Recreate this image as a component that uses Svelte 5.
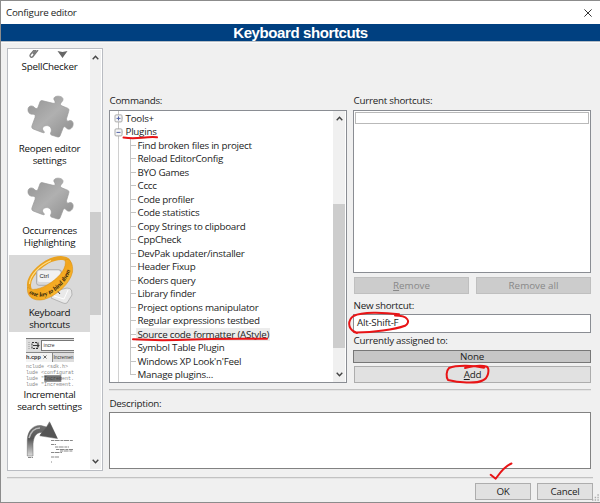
<script>
  const commands = [
    'Find broken files in project', 'Reload EditorConfig', 'BYO Games', 'Cccc',
    'Code profiler', 'Code statistics', 'Copy Strings to clipboard', 'CppCheck',
    'DevPak updater/installer', 'Header Fixup', 'Koders query', 'Library finder',
    'Project options manipulator', 'Regular expressions testbed',
    'Source code formatter (AStyle)', 'Symbol Table Plugin',
    "Windows XP Look'n'Feel", 'Manage plugins...'
  ];
  const selected = 'Source code formatter (AStyle)';
</script>

{#snippet chevron(up)}
  <svg class="chev" width="7" height="5" viewBox="0 0 7 5">
    <path d={up ? 'M.7 4.2 3.5 1.2 6.3 4.2' : 'M.7 .8 3.5 3.8 6.3 .8'} fill="none" stroke="#444" stroke-width="1.4" />
  </svg>
{/snippet}

{#snippet puzzle()}
  <svg width="48" height="48" viewBox="0 0 48 48">
    <defs>
      <linearGradient id="pz" x1="0" y1="0" x2="1" y2="1">
        <stop offset="0" stop-color="#929292" /><stop offset=".5" stop-color="#b0b0b0" /><stop offset="1" stop-color="#8c8c8c" />
      </linearGradient>
    </defs>
    <path d="M16 8.6 L27 11.3 C29.8 11.6 29.5 10 28.3 8.2 C26.8 5.6 29.5 4 32.5 4.2 C36 4.3 38 6.5 36.5 9 C35 11 33.6 12 35.2 13.6 L42 16.4 C43.2 17 43 18.5 42.6 19.6 L40.6 26.3 C40.2 29 41.5 29.8 43.3 28.7 C46 27.8 47.7 30.2 47 33.3 C46.2 36.8 43 38.2 40.8 36.4 C39.2 34.5 38 34 37 36.2 L34.2 43.5 C33.7 45 32.5 45.2 31 44.8 L25.4 43 C24 42.2 24.4 41 25.2 39.4 C26 36 23.5 33.4 20.2 33.6 C16.8 34 15.6 36.7 17.3 38.7 C19 40.4 18.6 41.2 16.5 40.5 L7.3 37 C5.9 36.4 5.5 35.3 6 33.7 L9 25.5 C9.8 22.7 8.6 22 6.5 22.2 C3.5 22.3 1.7 20 2 17.2 C2.3 14.2 5 13.2 7.5 14.6 C9.3 16.8 11.2 17.3 12 15.3 L14 9.8 Q14.5 8.5 16 8.6Z" fill="url(#pz)" stroke="#999" stroke-width=".7" />
  </svg>
{/snippet}

<div class="window">
  <header class="caption">
    <span>Configure editor</span>
    <svg width="8" height="8" viewBox="0 0 8 8"><path d="M.4.4 7.6 7.6M7.6.4.4 7.6" stroke="#333" stroke-width="1" /></svg>
  </header>
  <h1>Keyboard shortcuts</h1>

  <main>
    <aside>
      <div class="pages">
        <div class="page first">
          <svg width="48" height="8" viewBox="0 0 48 8">
            <path d="M4 5 9 -1M6.5 7 12 0M4 5Q4 8 6.5 7M7 4 10 0" fill="none" stroke="#777" stroke-width="1.4" />
            <path d="M31.5 1 36.5 2 41.5 1 36.5 8Z" fill="#666" />
          </svg>
          <span>SpellChecker</span>
        </div>
        <div class="page">{@render puzzle()}<span>Reopen editor<br />settings</span></div>
        <div class="page">{@render puzzle()}<span>Occurrences<br />Highlighting</span></div>
        <div class="page active">
          <svg width="48" height="48" viewBox="0 0 48 48">
            <defs>
              <linearGradient id="ring" x1="0" y1="0" x2="1" y2="1">
                <stop offset="0" stop-color="#ffd35c" /><stop offset=".5" stop-color="#f2a51c" /><stop offset="1" stop-color="#ffc440" />
              </linearGradient>
              <path id="band" d="M3 37.5 C13 44 24 39.5 31 33.5 C38 27.5 44.5 19 46 6.5" />
            </defs>
            <path d="M29 35 41 32 Q44 32 45.5 34 L46 39 41 47 Q39 48 37 47 L25 42Z" fill="#e9e9e9" stroke="#a8a8a8" stroke-width=".8" />
            <path d="M28 40 38 43 42 34" fill="none" stroke="#fff" />
            <path d="M4 34 C0 25 8 14 21 6 C33 0 43 1 43.5 8" fill="none" stroke="#e9a220" stroke-width="4" />
            <rect x="10.5" y="13.8" width="25" height="15.5" rx="2.5" fill="#d9d9d9" stroke="#999" stroke-width=".7" />
            <rect x="12" y="14.5" width="22" height="11.5" rx="1.5" fill="#f1f1f1" />
            <text x="13.5" y="21.6" class="ctrl">Ctrl</text>
            <path d="M1.6 31 C4 35.5 15 33.5 25 26.5 C35 19.5 41 11 39 4 C44 1.5 47.5 8 46.5 16 C44 28 30 40 18 43.5 C7 46 0 40 1.6 31Z" fill="url(#ring)" stroke="#d48b10" stroke-width=".5" />
            <path d="M3.5 28 C4 19 14 9 25 4.5" fill="none" stroke="#ffdf88" stroke-width="1.2" />
            <text class="ringtext"><textPath href="#band" textLength="54">one key to bind them</textPath></text>
            <path d="M32 35.5 34 38" stroke="#333" stroke-width="1" />
          </svg>
          <span>Keyboard<br />shortcuts</span>
        </div>
        <div class="page">
          <svg width="48" height="48" viewBox="0 0 48 48">
            <rect width="48" height="24" fill="#ddd" />
            <rect y="0" width="48" height="1" fill="#777" />
            <path d="M3 4v8" stroke="#999" stroke-width="1" stroke-dasharray="1 1" />
            <rect x="6" y="4.5" width="6" height="6" fill="none" stroke="#333" stroke-dasharray="2 1" /><path d="M7 7.5h6M11 5.5l2 2-2 2" fill="none" stroke="#333" />
            <rect x="15.5" y="2.5" width="33" height="10" fill="#fff" stroke="#777" />
            <text x="17.5" y="9.2" class="mini" textLength="11" lengthAdjust="spacingAndGlyphs">incre</text>
            <rect y="15" width="26" height="9" fill="#f3f3f3" />
            <path d="M26.5 15v9M0 14.5h48" stroke="#888" />
            <text x="0" y="21.4" class="mini bold" textLength="15" lengthAdjust="spacingAndGlyphs">h.cpp</text>
            <path d="M17.5 17.5 20.5 20.5M20.5 17.5 17.5 20.5" stroke="#444" stroke-width=".8" />
            <text x="27.5" y="21.4" class="mini" textLength="20" lengthAdjust="spacingAndGlyphs">Incremen</text>
            <rect y="24" width="48" height="24" fill="#fff" />
            <text x="0" y="29.8" class="code">nclude &lt;sdk.h&gt;</text>
            <text x="0" y="36" class="code">lude &lt;configurat</text>
            <rect x="18.3" y="37.2" width="17" height="6.6" fill="#777" />
            <text x="0" y="42.2" class="code">lude "<tspan fill="#444">Increm</tspan>ent.</text>
            <text x="0" y="47.8" class="code">lude "Increment.</text>
          </svg>
          <span>Incremental<br />search settings</span>
        </div>
        <div class="page">
          <svg width="48" height="48" viewBox="0 0 48 48">
            <defs>
              <linearGradient id="arrow" x1="0" y1="0" x2="0" y2="1">
                <stop offset="0" stop-color="#777" /><stop offset=".5" stop-color="#555" /><stop offset="1" stop-color="#ddd" />
              </linearGradient>
            </defs>
            <path d="M1.3 36 V20 C1.5 10 8 4.8 15 5.5 L20.5 7 23.5 1.8 31.5 18.6 13.8 15.8 16 12.5 C9.5 12 7.5 18 7 24 V36Z" fill="url(#arrow)" stroke="#666" stroke-width=".5" />
            <path d="M3 18C5 11 9 8 14 8" fill="none" stroke="#bbb" stroke-width="1.6" />
            <path d="M14 15 24 3 31 18" fill="#555" />
            <path d="M25 20.5h22M25 24.5h5M29 27h14M30 29.5h17M34 31h13M25 32.5h11M25 37h8M2 37.5h5M25 42h1" stroke="#888" stroke-width="1" stroke-dasharray="3 .6 5 .8" />
          </svg>
        </div>
      </div>
      <div class="scroll side">{@render chevron(true)}<i></i>{@render chevron(false)}</div>
    </aside>

    <section class="content">
      <div class="upper">
        <div class="left">
          <div class="label top">Commands:</div>
          <div class="tree">
            <div class="nodes">
              <div class="node root"><svg width="9" height="14" viewBox="0 0 9 14"><path d="M4.5 0v14M7 7h3" stroke="#c4c4c4" /><rect x="1" y="3.9" width="7" height="7" rx="1" fill="#f6f6f6" stroke="#aaa" /><path d="M2.5 7.4h4M4.5 5.4v4" stroke="#5264a8" /></svg><span>Tools+</span></div>
              <div class="node root"><svg width="9" height="14" viewBox="0 0 9 14"><path d="M4.5 0v14M7 7h3" stroke="#c4c4c4" /><rect x="1" y="3.9" width="7" height="7" rx="1" fill="#f6f6f6" stroke="#aaa" /><path d="M2.5 7.4h4" stroke="#5264a8" /></svg><span>Plugins</span></div>
              <div class="kids">
                {#each commands as c}
                  <div class="node kid"><b></b><span class:sel={c === selected}>{c}</span></div>
                {/each}
              </div>
            </div>
            <div class="scroll mid">{@render chevron(true)}<i></i>{@render chevron(false)}</div>
          </div>
        </div>
        <div class="right">
          <div class="label top">Current shortcuts:</div>
          <div class="list"><div class="row"></div></div>
          <div class="pair">
            <button disabled><u>R</u>emove</button>
            <button disabled>Remove all</button>
          </div>
          <div class="label new">New shortcut:</div>
          <div class="input">Alt-Shift-F</div>
          <div class="label cur">Currently assigned to:</div>
          <div class="none">None</div>
          <button class="add"><u>A</u>dd</button>
        </div>
      </div>
      <hr />
      <div class="label desc">Description:</div>
      <div class="description"></div>
    </section>
  </main>
  <hr class="wide" />
  <footer>
    <button>OK</button>
    <button>Cancel</button>
  </footer>

  <svg class="ink" width="600" height="503" viewBox="0 0 600 503">
    <path d="M592 500h7M594.7 497.5h4M597.4 495h1.5" stroke="#aaa" stroke-width="1.4" stroke-dasharray="1.4 1.3" />
    <g fill="none" stroke="#e81416" stroke-width="2" stroke-linecap="round" stroke-linejoin="round">
      <path d="M123.5 137.6 Q132 138.6 142 137.7 T157 137.3" />
      <path d="M133 339.3 C150 340.3 173 340.3 192 339.4 S245 338.7 267 338.8" />
      <path d="M399 314.3 C384 312.3 362 311.5 353.5 316 C348 320 347 328 355 332.5 C373 332.7 395 329.5 405 325.8 C411 322 408.5 315.5 395 315.5M353 331 357 333" />
      <path d="M484 367.7 C472 365 456 365.3 449 368 C446 371 446 377 448 380 C458 382.6 476 384 482.5 380.5 C489 378 489.5 369 487 366.8 C481 364.7 473 366 465 368" />
      <path d="M490.7 474.8 495.7 478.7 C500 473 504 466.5 511.5 463.5" />
    </g>
  </svg>
</div>

<style>
  :global(body) { margin: 0; }
  * { box-sizing: border-box; }
  .window {
    position: relative; width: 600px; height: 503px; overflow: hidden;
    display: flex; flex-direction: column;
    background: #f0f0f0; border: solid #8c8c8c; border-width: 1px 0 1px 1px;
    font: 9.8px/12px "Open Sans", "Noto Sans", sans-serif; color: #1c1c1c;
    letter-spacing: -.25px; white-space: nowrap;
  }
  svg { display: block; flex: none; letter-spacing: 0; }
  .caption {
    height: 23px; flex: none; background: #fff; padding: 0 8px 0 5px;
    display: flex; align-items: center; justify-content: space-between;
  }
  h1 {
    margin: 0; height: 17px; flex: none; background: #004080; color: #fff;
    font: bold 15px/18px "Liberation Sans", Arial, sans-serif; text-align: center;
    letter-spacing: -.4px;
    box-shadow: 0 1px #b5bdc6, 0 2px #fafafa;
  }
  main { display: flex; height: 430px; flex: none; padding: 7px 9px 0 6px; gap: 6px; }
  aside { display: flex; width: 96px; height: 423px; border: 1px solid #b9bcc2; background: #fff; padding: 1px; overflow: hidden; }
  .pages { width: 81px; flex: none; overflow: hidden; display: flex; flex-direction: column; gap: 5px; }
  .page { height: 77px; flex: none; display: flex; flex-direction: column; align-items: center; padding-top: 1px; text-align: center; }
  .page span { margin-top: 3px; line-height: 12px; color: #111; }
  .page.first { height: 36px; padding-top: 0; }
  .page.first span { margin-top: 3px; }
  .active { background: #d9d9d9; }
  .ctrl { font: 6px "Liberation Sans", sans-serif; fill: #222; }
  .ringtext { font: italic bold 6.4px "Liberation Serif", serif; fill: #30230d; }
  .mini { font: 5.5px "Liberation Sans", sans-serif; fill: #333; }
  .mini.bold { font-weight: bold; }
  .code { font: 5px "Liberation Mono", monospace; fill: #888; }
  .scroll { flex: 1; background: #f0f0f0; display: flex; flex-direction: column; align-items: center; }
  .scroll i { width: 100%; background: #cdcdcd; }
  .side { padding: 5px 0; }
  .side i { height: 103px; margin-top: 152px; margin-bottom: auto; }
  .content { flex: 1; }
  .upper { display: flex; height: 341px; gap: 6px; }
  .left { width: 238px; }
  .right { width: 238px; display: flex; flex-direction: column; }
  .label { line-height: 14px; padding-left: .5px; }
  .top { height: 62px; padding-top: 46px; }
  .tree { height: 273px; border: 1px solid #8a8d93; background: #fff; display: flex; padding: 0 1px 0 0; }
  .nodes { width: 223px; padding-top: .7px; }
  .node { height: 13.5px; display: flex; align-items: center; line-height: 13px; }
  .root { padding-left: 4px; gap: 2.5px; }
  .kids { margin-left: 8px; border-left: 1px solid #d0d0d0; padding-left: 11px; }
  .kid { border-left: 1px solid #c4c4c4; }
  .kid:last-child { background: linear-gradient(#c4c4c4, #c4c4c4) 0 0 / 1px 7px no-repeat; border-left: 0; padding-left: 1px; }
  .kid b { width: 5px; height: 1px; background: #c4c4c4; }
  .kid span { padding: 0 1px 0 1.5px; }
  .sel { background: #ececec; }
  .mid { padding: 5px 0; }
  .mid i { height: 144px; margin-top: 83px; margin-bottom: auto; }
  .list { height: 163px; border: 1px solid #8a8d93; background: #fff; padding: 1px; }
  .row { height: 12px; border: 1px solid #b9b9b9; }
  .pair { display: flex; gap: 7px; margin: 4px 0 0 1px; }
  button {
    font: inherit; letter-spacing: inherit; line-height: 14px; color: #1c1c1c; padding: 0; margin: 0; height: 17px;
    border: 1px solid #adadad; border-radius: 0; background: #e1e1e1;
  }
  u { text-underline-offset: 1px; text-decoration-thickness: 1px; }
  .pair button { flex: 1; background: #ccc; border-color: #bfbfbf; color: #888; letter-spacing: 0; }
  .new { margin-top: 5px; }
  .input { margin-top: 1px; height: 19px; border: 1px solid #8a8d93; background: #fff; padding-left: 3px; line-height: 16px; }
  .cur { margin-top: 1px; }
  .none { margin-top: 2px; height: 13px; border: 1px solid #777; background: #c6c6c6; text-align: center; line-height: 12px; }
  .add { margin: 3px 0 0 1px; }
  hr { margin: 0; border: 0; height: 2px; background: #c2c2c2; border-bottom: 1px solid #e4e4e4; flex: none; }
  .desc { margin-top: 6px; }
  .description { margin-top: 1px; height: 57px; border: 1px solid #828282; background: #fff; width: 482px; }
  .wide { margin: 6px 7px 0 6px; }
  footer { display: flex; justify-content: flex-end; gap: 6px; padding: 4px 7px 0 0; }
  footer button { width: 56px; }
  .ink { position: absolute; left: -1px; top: -1px; pointer-events: none; }
</style>
